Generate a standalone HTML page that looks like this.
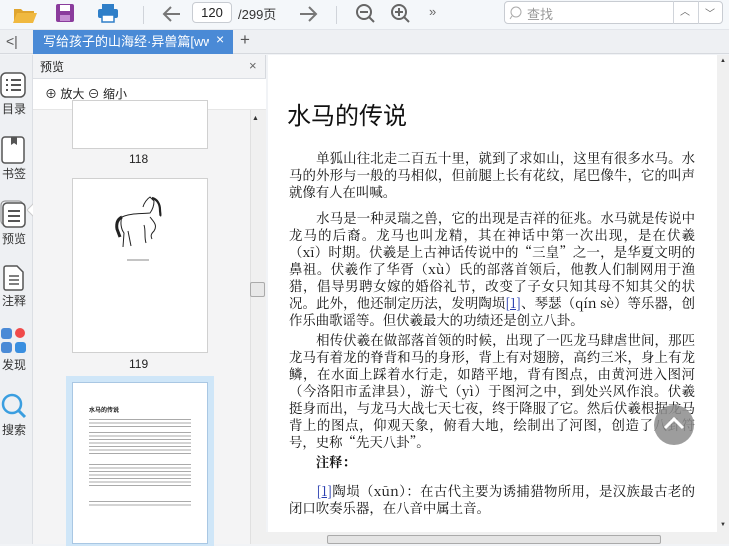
<!DOCTYPE html>
<html><head><meta charset="utf-8"><style>
*{margin:0;padding:0;box-sizing:border-box}
body{width:729px;height:544px;overflow:hidden;position:relative;background:#f1f3f6;font-family:"Liberation Sans","Noto Sans CJK SC",sans-serif;color:#222}
.abs{position:absolute}
#tb{left:0;top:0;width:729px;height:30px;background:#f4f7fa;border-bottom:1px solid #e2e5ea}
#tabs{left:0;top:30px;width:729px;height:24px;background:#eef0f3;border-bottom:1px solid #d6d9de}
#tab{left:33px;top:30px;width:200px;height:24px;background:#4a8ad6}
#tabt{left:43px;top:30px;width:166px;height:24px;color:#fff;font-size:13px;line-height:24px;white-space:nowrap;overflow:hidden}
#side{left:0;top:55px;width:33px;height:489px;background:#eef0f3;border-right:1px solid #dcdfe4}
.sl{position:absolute;left:0;width:28px;text-align:center;font-size:12px;color:#333}
#pv{left:33px;top:55px;width:233px;height:489px;background:#f2f3f5;border-right:1px solid #d6d9de}
#pvh{left:33px;top:55px;width:233px;height:24px;border-bottom:1px solid #dcdfe4;font-size:12px;line-height:24px;padding-left:7px}
#zr{left:33px;top:79px;width:233px;height:31px;background:#fff;font-size:12px;line-height:31px;padding-left:12px;border-bottom:1px solid #e6e6e6}
#list{left:33px;top:110px;width:217px;height:434px;background:#f4f4f5}
.th{position:absolute;background:#fff;border:1px solid #d0d0d0}
#doc{left:268px;top:55px;width:449px;height:477px;background:#fff}
.t{font-family:"Noto Serif CJK SC","Liberation Serif",serif;font-size:13.4px;line-height:17px;color:#111;position:absolute;left:289px;width:406px}
.t div{text-align:justify;text-align-last:justify;height:17px;white-space:nowrap;overflow:visible}
.t div.l{text-align-last:left}
.ft{color:#2a3fb0;text-decoration:underline}
.ln{background:repeating-linear-gradient(#fff 0,#fff 1px,#aaa 1px,#aaa 2px,#fff 2px,#fff 3.5px)}
</style></head><body>
<div id="tb" class="abs"></div>
<svg class="abs" style="left:12px;top:3px" width="26" height="22"><path d="M2 6h7l2 2h11v3H6L2 19z" fill="#e0a52e"/><path d="M5 10h20l-4 10H1z" fill="#f0b940"/></svg>
<svg class="abs" style="left:55px;top:3px" width="20" height="20"><rect x="1" y="1" width="18" height="18" rx="2" fill="#8a3c9c"/><rect x="5" y="2" width="10" height="6" fill="#fff"/><rect x="5" y="12" width="10" height="6" fill="#c58fd3"/></svg>
<svg class="abs" style="left:97px;top:3px" width="22" height="20"><rect x="5" y="1" width="12" height="5" fill="#2f7fc8"/><rect x="1" y="6" width="20" height="9" rx="2" fill="#2f7fc8"/><rect x="5" y="12" width="12" height="7" fill="#fff" stroke="#2f7fc8" stroke-width="1.5"/></svg>
<div class="abs" style="left:143px;top:6px;width:1px;height:18px;background:#d0d4da"></div>
<svg class="abs" style="left:162px;top:5px" width="20" height="18"><path d="M18 9H3M9 2L2 9l7 7" stroke="#777" stroke-width="2" fill="none"/></svg>
<div class="abs" style="left:192px;top:2px;width:40px;height:21px;border:1px solid #c8ccd2;border-radius:4px;background:#fff;font-size:13px;text-align:center;line-height:19px">120</div>
<div class="abs" style="left:238px;top:4px;font-size:13px;color:#333">/299页</div>
<svg class="abs" style="left:298px;top:5px" width="20" height="18"><path d="M2 9h15M11 2l7 7-7 7" stroke="#777" stroke-width="2" fill="none"/></svg>
<div class="abs" style="left:336px;top:6px;width:1px;height:18px;background:#d0d4da"></div>
<svg class="abs" style="left:355px;top:3px" width="22" height="22"><circle cx="9" cy="9" r="7" stroke="#666" stroke-width="2" fill="none"/><path d="M5 9h8M14 14l5 5" stroke="#666" stroke-width="2"/></svg>
<svg class="abs" style="left:390px;top:3px" width="22" height="22"><circle cx="9" cy="9" r="7" stroke="#666" stroke-width="2" fill="none"/><path d="M5 9h8M9 5v8M14 14l5 5" stroke="#666" stroke-width="2"/></svg>
<div class="abs" style="left:429px;top:4px;font-size:13px;color:#666">»</div>
<div class="abs" style="left:504px;top:1px;width:219px;height:23px;border:1px solid #c8ccd2;border-radius:4px;background:#fff"></div>
<svg class="abs" style="left:509px;top:6px" width="14" height="14"><circle cx="7" cy="6" r="5" stroke="#aaa" fill="none"/><path d="M3 10l-2 3" stroke="#aaa"/></svg>
<div class="abs" style="left:527px;top:4px;font-size:13px;color:#999">查找</div>
<div class="abs" style="left:673px;top:1px;width:1px;height:23px;background:#d0d4da"></div>
<div class="abs" style="left:698px;top:1px;width:1px;height:23px;background:#d0d4da"></div>
<div class="abs" style="left:680px;top:3px;font-size:10px;color:#666">︿</div>
<div class="abs" style="left:705px;top:5px;font-size:10px;color:#666">﹀</div>

<div id="tabs" class="abs"></div>
<div class="abs" style="left:6px;top:33px;font-size:14px;color:#555">&lt;|</div>
<div id="tab" class="abs"></div>
<div id="tabt" class="abs">写给孩子的山海经·异兽篇[www.</div>
<div class="abs" style="left:216px;top:31px;font-size:14px;color:#fff">×</div>
<div class="abs" style="left:240px;top:30px;font-size:17px;color:#555">+</div>

<div id="side" class="abs"></div>
<svg class="abs" style="left:0;top:72px" width="26" height="26"><rect x="1" y="1" width="24" height="24" rx="5" stroke="#555" stroke-width="1.5" fill="#fff"/><path d="M6 8h2M11 8h10M6 13h2M11 13h10M6 18h2M11 18h10" stroke="#555" stroke-width="2"/></svg>
<div class="sl" style="top:100px">目录</div>
<svg class="abs" style="left:1px;top:136px" width="24" height="28"><rect x="1" y="1" width="22" height="26" rx="3" stroke="#555" stroke-width="1.5" fill="#fff"/><path d="M10 1v8l3-2 3 2V1" fill="#555"/></svg>
<div class="sl" style="top:165px">书签</div>
<svg class="abs" style="left:0;top:200px" width="26" height="28"><rect x="1" y="1" width="22" height="24" rx="4" stroke="#888" fill="none"/><rect x="3" y="3" width="22" height="24" rx="4" stroke="#555" stroke-width="1.5" fill="#fff"/><path d="M8 11h12M8 16h12M8 21h12" stroke="#555" stroke-width="2"/></svg>
<div class="sl" style="top:230px">预览</div>
<svg class="abs" style="left:3px;top:265px" width="22" height="26"><path d="M1 3a2 2 0 012-2h11l6 6v16a2 2 0 01-2 2H3a2 2 0 01-2-2z" stroke="#555" stroke-width="1.5" fill="#fff"/><path d="M6 11h10M6 15h10M6 19h10" stroke="#555" stroke-width="1.5"/></svg>
<div class="sl" style="top:292px">注释</div>
<svg class="abs" style="left:1px;top:328px" width="26" height="26"><rect x="0" y="0" width="11" height="11" rx="3" fill="#4a8ad6"/><circle cx="19" cy="5" r="5" fill="#f04a4a"/><rect x="0" y="14" width="11" height="11" rx="3" fill="#4a8ad6"/><rect x="14" y="14" width="11" height="11" rx="3" fill="#3a8fe0"/></svg>
<div class="sl" style="top:356px">发现</div>
<svg class="abs" style="left:1px;top:393px" width="26" height="26"><circle cx="11" cy="11" r="9" stroke="#3a9ee0" stroke-width="2.5" fill="none"/><path d="M18 18l6 6" stroke="#3a9ee0" stroke-width="3"/></svg>
<div class="sl" style="top:421px">搜索</div>
<svg class="abs" style="left:27px;top:203px" width="7" height="14"><path d="M7 0L0 7l7 7" fill="#fff" stroke="#ccc"/></svg>

<div id="pv" class="abs"></div>
<div id="pvh" class="abs">预览</div>
<div class="abs" style="left:249px;top:58px;font-size:13px;color:#666">×</div>
<div id="zr" class="abs">⊕ 放大 ⊖ 缩小</div>
<div id="list" class="abs"></div>
<div class="abs" style="left:250px;top:110px;width:16px;height:434px;background:#f0f0f0;border-left:1px solid #e0e0e0"></div>
<div class="abs" style="left:252px;top:115px;font-size:7px;color:#333">▲</div>
<div class="abs" style="left:250px;top:282px;width:15px;height:15px;background:#e8e8e8;border:1px solid #aaa;border-radius:2px"></div>
<div class="th" style="left:72px;top:100px;width:136px;height:49px"></div>
<div class="abs" style="left:129px;top:152px;font-size:12px">118</div>
<div class="th" style="left:72px;top:178px;width:136px;height:175px"></div>
<svg class="abs" style="left:112px;top:195px" width="60" height="70"><g stroke="#222" fill="none" stroke-width="1"><path d="M10 22c8-4 20-3 28-4 3-4 4-8 4-12l-4-4c-3 2-6 6-7 10"/><path d="M40 3c5 1 8 6 8 12 0 3 1 5 0 6" stroke-width="2.2"/><path d="M10 22c-2 5-1 12 2 16l-1 14M16 36l3 15M32 30c2 6 0 12 2 18M38 22c3 4 8 8 4 14-2 2-4 4-2 8"/><path d="M10 22c-4 2-6 6-5 12l3 8" stroke-width="3"/></g><path d="M15 65h22" stroke="#888" stroke-width="1"/></svg>
<div class="abs" style="left:129px;top:357px;font-size:12px">119</div>
<div class="abs" style="left:66px;top:376px;width:148px;height:170px;background:#cfe6f8"></div>
<div class="abs" style="left:72px;top:382px;width:136px;height:162px;background:#fff;border:1px solid #a9c7e3"></div>
<div class="abs" style="left:89px;top:405px;font-size:6px;font-weight:bold;color:#222">水马的传说</div>
<div class="abs ln" style="left:89px;top:418px;width:102px;height:10px"></div>
<div class="abs ln" style="left:89px;top:431px;width:102px;height:25px"></div>
<div class="abs ln" style="left:89px;top:463px;width:102px;height:25px"></div>
<div class="abs ln" style="left:89px;top:500px;width:102px;height:7px"></div>

<div id="doc" class="abs"></div>
<div class="abs" style="left:717px;top:55px;width:12px;height:489px;background:#f0f0f0"></div>
<div class="abs" style="left:720px;top:58px;font-size:6px;color:#333">▲</div>
<div class="abs" style="left:720px;top:522px;font-size:6px;color:#333">▼</div>
<div class="abs" style="left:266px;top:532px;width:451px;height:12px;background:#f0f0f0"></div>
<div class="abs" style="left:327px;top:535px;width:334px;height:9px;background:#e4e4e4;border:1px solid #aaa;border-radius:2px"></div>
<div class="abs" style="left:287px;top:96px;font-size:24px;font-family:'Noto Sans CJK SC',sans-serif;color:#111">水马的传说</div>

<div class="t" style="top:149px">
<div>　　单狐山往北走二百五十里，就到了求如山，这里有很多水马。水</div>
<div>马的外形与一般的马相似，但前腿上长有花纹，尾巴像牛，它的叫声</div>
<div class="l">就像有人在叫喊。</div>
</div>
<div class="t" style="top:209px">
<div>　　水马是一种灵瑞之兽，它的出现是吉祥的征兆。水马就是传说中</div>
<div>龙马的后裔。龙马也叫龙精，其在神话中第一次出现，是在伏羲</div>
<div>（xī）时期。伏羲是上古神话传说中的“三皇”之一，是华夏文明的</div>
<div>鼻祖。伏羲作了华胥（xù）氏的部落首领后，他教人们制网用于渔</div>
<div>猎，倡导男聘女嫁的婚俗礼节，改变了子女只知其母不知其父的状</div>
<div>况。此外，他还制定历法，发明陶埙<span class="ft">[1]</span>、琴瑟（qín sè）等乐器，创</div>
<div class="l">作乐曲歌谣等。但伏羲最大的功绩还是创立八卦。</div>
</div>
<div class="t" style="top:331px">
<div>　　相传伏羲在做部落首领的时候，出现了一匹龙马肆虐世间，那匹</div>
<div>龙马有着龙的脊背和马的身形，背上有对翅膀，高约三米，身上有龙</div>
<div>鳞，在水面上踩着水行走，如踏平地，背有图点，由黄河进入图河</div>
<div>（今洛阳市孟津县），游弋（yì）于图河之中，到处兴风作浪。伏羲</div>
<div>挺身而出，与龙马大战七天七夜，终于降服了它。然后伏羲根据龙马</div>
<div>背上的图点，仰观天象，俯看大地，绘制出了河图，创造了八卦符</div>
<div class="l">号，史称“先天八卦”。</div>
</div>
<div class="t" style="top:453px"><div class="l" style="font-weight:bold">　　注释：</div></div>
<div class="t" style="top:482px">
<div>　　<span class="ft">[1]</span>陶埙（xūn）：在古代主要为诱捕猎物所用，是汉族最古老的</div>
<div class="l">闭口吹奏乐器，在八音中属土音。</div>
</div>
<div class="abs" style="left:654px;top:405px;width:40px;height:40px;border-radius:50%;background:rgba(140,140,140,0.85)"></div>
<svg class="abs" style="left:662px;top:413px" width="24" height="20"><path d="M3 15l9-9 9 9" stroke="#fff" stroke-width="3" fill="none"/></svg>
</body></html>
